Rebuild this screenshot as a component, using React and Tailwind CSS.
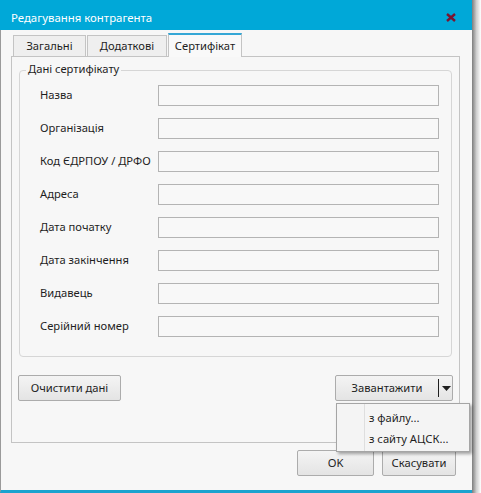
import React from 'react'

const FIELDS = [
  'Назва',
  'Організація',
  'Код ЄДРПОУ / ДРФО',
  'Адреса',
  'Дата початку',
  'Дата закінчення',
  'Видавець',
  'Серійний номер',
]

const btn =
  'h-[26px] border border-[#acacac] rounded-[2px] bg-gradient-to-b from-[#f4f4f4] to-[#e4e4e4] text-[11.2px] text-[#1e1e1e] flex items-center justify-center'

const Tab = ({ label, active, w }) => (
  <div
    className={
      active
        ? `h-[24px] ${w} border border-[#c4c4c4] border-b-0 border-t-2 border-t-[#35a7d6] bg-[#f9f9f9] flex items-center justify-center -mb-px relative z-10`
        : `h-[21px] ${w} border border-[#c4c4c4] border-b-0 bg-[#efefef] flex items-center justify-center`
    }
  >
    {label}
  </div>
)

export default function App() {
  return (
    <div
      className="w-[481px] h-[493px] bg-white text-[11.2px] text-[#1e1e1e] flex"
      style={{ fontFamily: '"Noto Sans", "Open Sans", sans-serif' }}
    >
      <div className="w-[472px] h-[493px] flex flex-col bg-[#f7f7f7] border-l border-[#9a9a9a] border-b-[3px] border-b-[#1ba3cf] relative">
        <div className="h-[30px] bg-[#00a8d8] flex items-center justify-between pl-[11px] pr-[16px] -ml-px">
          <span className="text-white text-[11.4px] pt-[6px]">Редагування контрагента</span>
          <svg width="10" height="9" viewBox="0 0 10 9" className="mt-[5px]">
            <path d="M1 1 L9 8 M9 1 L1 8" stroke="#7a1430" strokeWidth="2.4" />
          </svg>
        </div>

        <div className="flex items-end pl-[12px] pt-[3px] gap-[1px]">
          <Tab label="Загальні" w="w-[73px]" />
          <Tab label="Додаткові" w="w-[80px]" />
          <Tab label="Сертифікат" w="w-[74px]" active />
        </div>

        <div className="ml-[10px] w-[449px] h-[387px] border border-[#c4c4c4] bg-[#f7f7f7] flex flex-col px-[7px]">
          <div className="mt-[13px] h-[287px] border border-[#d6d6d6] rounded-[4px] relative flex flex-col pt-[14px] gap-[12px]">
            <span className="absolute -top-[10px] left-[6px] px-[2px] bg-[#f7f7f7]">Дані сертифікату</span>
            {FIELDS.map((f) => (
              <div key={f} className="flex items-center h-[21px]">
                <span className="w-[138px] pl-[20px] whitespace-nowrap">{f}</span>
                <div className="w-[281px] h-[21px] border border-[#b4b4b4] bg-[#f8f8f8]" />
              </div>
            ))}
          </div>

          <div className="flex justify-between mt-[18px] -mx-[1px]">
            <button className={`${btn} w-[103px]`}>Очистити дані</button>
            <div className={`${btn} w-[118px] justify-start`}>
              <span className="w-[102px] text-center">Завантажити</span>
              <span className="w-px h-[18px] bg-[#1e1e1e]" />
              <svg width="9" height="5" viewBox="0 0 9 5" className="ml-[3px]">
                <path d="M0 0 H9 L4.5 5 Z" fill="#1e1e1e" />
              </svg>
            </div>
          </div>
        </div>

        <div className="flex justify-end gap-[8px] pr-[16px] mt-[7px]">
          <button className={`${btn} w-[77px]`}>OK</button>
          <button className={`${btn} w-[74px]`}>Скасувати</button>
        </div>

        <div className="absolute left-[335px] top-[403px] w-[134px] h-[49px] bg-[#f4f4f4] border border-[#a5a5a5] shadow-[2px_2px_3px_rgba(0,0,0,0.35)] flex z-20">
          <div className="w-[28px] border-r border-[#dedede]" />
          <div className="flex flex-col pl-[4px] pt-[5px] gap-[3px]">
            <span className="leading-[18px]">з файлу...</span>
            <span className="leading-[18px]">з сайту АЦСК...</span>
          </div>
        </div>
      </div>
      <div className="w-[9px] h-[493px] bg-gradient-to-r from-[#7d7d7d] via-[#cfcfcf] to-white" />
    </div>
  )
}
